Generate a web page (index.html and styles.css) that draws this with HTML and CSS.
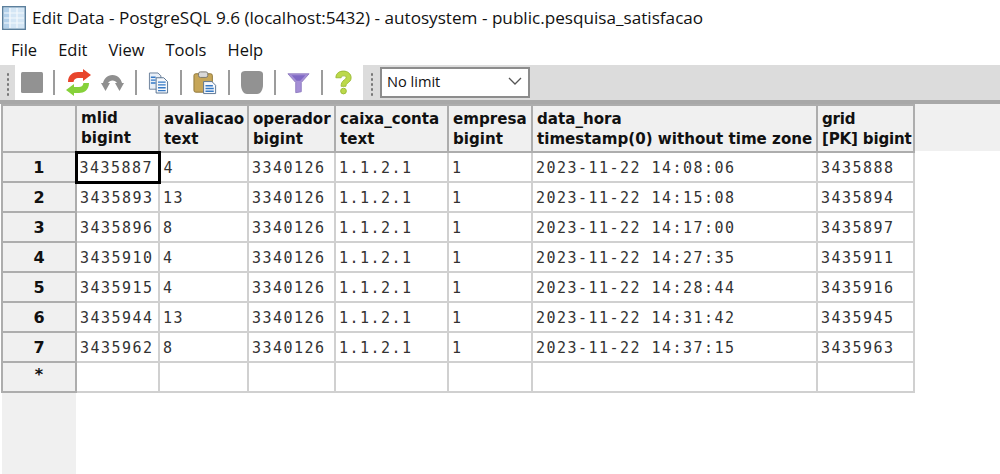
FILE: index.html
```html
<!DOCTYPE html>
<html lang="en">
<head>
<meta charset="utf-8">
<title>Edit Data</title>
<link rel="stylesheet" href="styles.css">
</head>
<body>
<div class="window">
  <header class="titlebar">
    <svg class="app-icon" width="24" height="24" viewBox="0 0 24 24">
      <rect x="0.700" y="0.700" width="22.600" height="22.600" fill="#d4e6f5" stroke="#5c7f9c" stroke-width="1.400"/>
      <rect x="2" y="2" width="5" height="20" fill="#b4d1ea"/>
      <path d="M8 2v20M15 2v20M2 7h20M2 12h20M2 17h20" stroke="#f4f9fd" stroke-width="1.200" fill="none"/>
    </svg>
    <span class="title">Edit Data - PostgreSQL 9.6 (localhost:5432) - autosystem - public.pesquisa_satisfacao</span>
  </header>
  <nav class="menubar">
    <span>File</span><span>Edit</span><span>View</span><span>Tools</span><span>Help</span>
  </nav>
  <div class="toolbar">
    <div class="tools">
      <div class="lead"><div class="grip"></div></div>
      <svg class="ic stop" width="22" height="21" viewBox="0 0 22 21"><rect x="0" y="0" width="22" height="21" rx="1.500" fill="#929292"/></svg>
      <div class="sep"></div>
      <svg class="ic" width="25" height="27" viewBox="0 0 25 27">
        <path d="M2 13C2 6 7 3 12 3h5V0l8 6-8 6V9h-5c-2 0-4 1-4.500 4z" fill="#e8452c"/>
        <path d="M23 14c0 7-5 10-10 10H8v3l-8-6 8-6v3h5c2 0 4-1 4.500-4z" fill="#86d13a"/>
      </svg>
      <svg class="ic undo" width="23" height="16" viewBox="0 0 23 16">
        <path d="M11.500 0C6 0 3 4 2 8L0 8 4.500 16 9 8 7 8C8 6.500 9.500 5.500 11.500 5.500S15 6.500 16 8L14 8 18.500 16 23 8 21 8C20 4 17 0 11.500 0Z" fill="#8f8f8f"/>
      </svg>
      <div class="sep"></div>
      <svg class="ic" width="21" height="24" viewBox="0 0 22 24">
        <path d="M1.500 1.500h9l3 3v14h-12z" fill="#e9eff7" stroke="#6a7f99"/>
        <path d="M8.500 6.500h8l4 4v12h-12z" fill="#f6f8fb" stroke="#55708f"/>
        <path d="M3 6h5M3 9h5M3 12h5M10.500 11h8M10.500 14h8M10.500 17h8M10.500 20h8" stroke="#3579c6" stroke-width="1.400"/>
      </svg>
      <div class="sep"></div>
      <svg class="ic" width="24" height="27" viewBox="0 0 26 27">
        <rect x="1" y="4" width="20" height="20" rx="2" fill="#c6a659" stroke="#8c7437"/>
        <rect x="6" y="2" width="10" height="6" rx="2" fill="#d9d9d9" stroke="#77746a"/>
        <path d="M11.500 12.500h9l4 4v9h-13z" fill="#f6f8fb" stroke="#55708f"/>
        <path d="M13.500 17h8M13.500 20h9M13.500 23h9" stroke="#3579c6" stroke-width="1.400"/>
      </svg>
      <div class="sep"></div>
      <svg class="ic" width="22" height="24" viewBox="0 0 22 24"><path d="M4 0h14c2 0 4 1 4 3v11c0 4-2 9-6 9H6c-4 0-6-5-6-9V3c0-2 2-3 4-3z" fill="#929292"/></svg>
      <div class="sep"></div>
      <svg class="ic" width="23" height="22" viewBox="0 0 25 23">
        <path d="M1 1.500h23L15.500 11v10l-6 1V11z" fill="#a58fd6" stroke="#8f7cc0"/>
        <path d="M5 3h15l-5.500 6h-4z" fill="#7f69c4"/>
      </svg>
      <div class="sep"></div>
      <svg class="ic" width="19" height="25" viewBox="0 0 20 26">
        <path d="M2 8C2 3 6 1 10 1s8 2.500 8 7c0 3-2 4.500-4 6-1 .8-1.500 1.500-1.500 3h-5c0-3 1-5 3-6.500 1-.8 2.300-1.500 2.300-2.800 0-1-.8-1.700-2.500-1.700S7.500 6.500 7.500 8z" fill="#bcd94a" stroke="#9aba35"/>
        <circle cx="10" cy="22" r="3" fill="#bcd94a" stroke="#9aba35"/>
      </svg>
    </div>
    <div class="limit-bar">
      <div class="grip"></div>
      <div class="select"><span>No limit</span>
        <svg width="14" height="8" viewBox="0 0 14 8"><path d="M1 1l6 6 6-6" fill="none" stroke="#555" stroke-width="1.300"/></svg>
      </div>
    </div>
  </div>
  <div class="grid-wrap">
    <table class="grid">
      <colgroup>
        <col class="c0"><col class="c1"><col class="c2"><col class="c3"><col class="c4"><col class="c5"><col class="c6"><col class="c7">
      </colgroup>
      <thead>
        <tr>
          <th class="corner"></th>
          <th>mlid<br>bigint</th>
          <th>avaliacao<br>text</th>
          <th>operador<br>bigint</th>
          <th>caixa_conta<br>text</th>
          <th>empresa<br>bigint</th>
          <th>data_hora<br>timestamp(0) without time zone</th>
          <th class="pk">grid<br>[PK] bigint</th>
        </tr>
      </thead>
      <tbody>
        <tr><th class="rn">1</th><td class="current">3435887</td><td>4</td><td>3340126</td><td>1.1.2.1</td><td>1</td><td>2023-11-22 14:08:06</td><td>3435888</td></tr>
        <tr><th class="rn">2</th><td>3435893</td><td>13</td><td>3340126</td><td>1.1.2.1</td><td>1</td><td>2023-11-22 14:15:08</td><td>3435894</td></tr>
        <tr><th class="rn">3</th><td>3435896</td><td>8</td><td>3340126</td><td>1.1.2.1</td><td>1</td><td>2023-11-22 14:17:00</td><td>3435897</td></tr>
        <tr><th class="rn">4</th><td>3435910</td><td>4</td><td>3340126</td><td>1.1.2.1</td><td>1</td><td>2023-11-22 14:27:35</td><td>3435911</td></tr>
        <tr><th class="rn">5</th><td>3435915</td><td>4</td><td>3340126</td><td>1.1.2.1</td><td>1</td><td>2023-11-22 14:28:44</td><td>3435916</td></tr>
        <tr><th class="rn">6</th><td>3435944</td><td>13</td><td>3340126</td><td>1.1.2.1</td><td>1</td><td>2023-11-22 14:31:42</td><td>3435945</td></tr>
        <tr><th class="rn">7</th><td>3435962</td><td>8</td><td>3340126</td><td>1.1.2.1</td><td>1</td><td>2023-11-22 14:37:15</td><td>3435963</td></tr>
        <tr class="new"><th class="rn star">*</th><td></td><td></td><td></td><td></td><td></td><td></td><td></td></tr>
      </tbody>
    </table>
  </div>
</div>
</body>
</html>
```

FILE: styles.css
```css
* { box-sizing: border-box; }
html, body { margin: 0; height: 100%; overflow: hidden; background: #fff; }
.window { width: 1000px; height: 474px; display: flex; flex-direction: column; }

.titlebar { height: 36px; display: flex; align-items: center; gap: 6px; padding: 0 0 0 2px; background: #fff; }
.title { font: 17.150px "Open Sans", "Noto Sans", sans-serif; color: #111; white-space: nowrap; padding-bottom: 1px; }
.app-icon { flex: none; }

.menubar { height: 29px; display: flex; align-items: center; gap: 21px; padding: 0 0 3px 11px; background: #fff; font: 16.500px "Open Sans", "Noto Sans", sans-serif; color: #111; }

.toolbar { height: 39px; display: flex; background: #dcdcdc; border-bottom: 4px solid #a8a8a8; }
.tools { display: flex; align-items: center; width: 363px; background: #fff; }
.lead { width: 15px; align-self: stretch; background: #dcdcdc; margin-right: 6px; flex: none; display: flex; justify-content: center; }
.grip { width: 10px; align-self: stretch; margin: 7px 0 3px; background: radial-gradient(circle at 50% 50%, #777 0, #777 1px, transparent 1.500px) 0 0 / 10px 5px repeat-y; flex: none; }
.ic { flex: none; margin: 0 11px; }
.stop { margin-left: 0; margin-right: 10px; }
.undo { margin-left: -1px; }
.sep { width: 2px; height: 25px; background: #9c9c9c; flex: none; }

.limit-bar { display: flex; align-items: stretch; width: 167px; background: #dcdcdc; }
.limit-bar .grip { margin: 7px 3px 3px 4px; }
.select { width: 150px; height: 31px; margin-top: 2px; background: #fff; border: 2px solid #8c8c8c; display: flex; align-items: center; justify-content: space-between; padding: 0 6px 3px 5px; font: 14.600px "Open Sans", "Noto Sans", sans-serif; color: #111; }

.grid-wrap { flex: 1; background: linear-gradient(#f0f0f0, #f0f0f0) 2px 0 / 100% 47px no-repeat, linear-gradient(#f0f0f0, #f0f0f0) 2px 0 / 74px 100% no-repeat, #fff; padding-left: 1px; }
.grid { border-collapse: collapse; table-layout: fixed; width: 911px; }
.c0 { width: 74px; } .c1 { width: 83px; } .c2 { width: 89px; } .c3 { width: 87px; }
.c4 { width: 113px; } .c5 { width: 84px; } .c6 { width: 285px; } .c7 { width: 97px; }

.grid thead th { height: 47px; background: #f0f0f0; border: 2px solid #adadad; padding: 0 0 0 4px; text-align: left; font: bold 15.100px/20px "DejaVu Sans", sans-serif; color: #111; white-space: nowrap; overflow: hidden; vertical-align: middle; }
.grid thead .pk { letter-spacing: -0.200px; }
.grid td { height: 30px; border: 2px solid #d0d0d0; padding: 1px 0 0 3px; font: 15px "DejaVu Sans Mono", monospace; letter-spacing: 1.470px; color: #333; white-space: nowrap; overflow: hidden; }
.grid .rn { height: 30px; background: #f0f0f0; border: 2px solid #adadad; padding: 0; text-align: center; font: bold 16px "DejaVu Sans", sans-serif; color: #111; }
.grid .star { vertical-align: top; line-height: 24px; }
.grid .current { border: 3px solid #000; padding-left: 2px; }
```
